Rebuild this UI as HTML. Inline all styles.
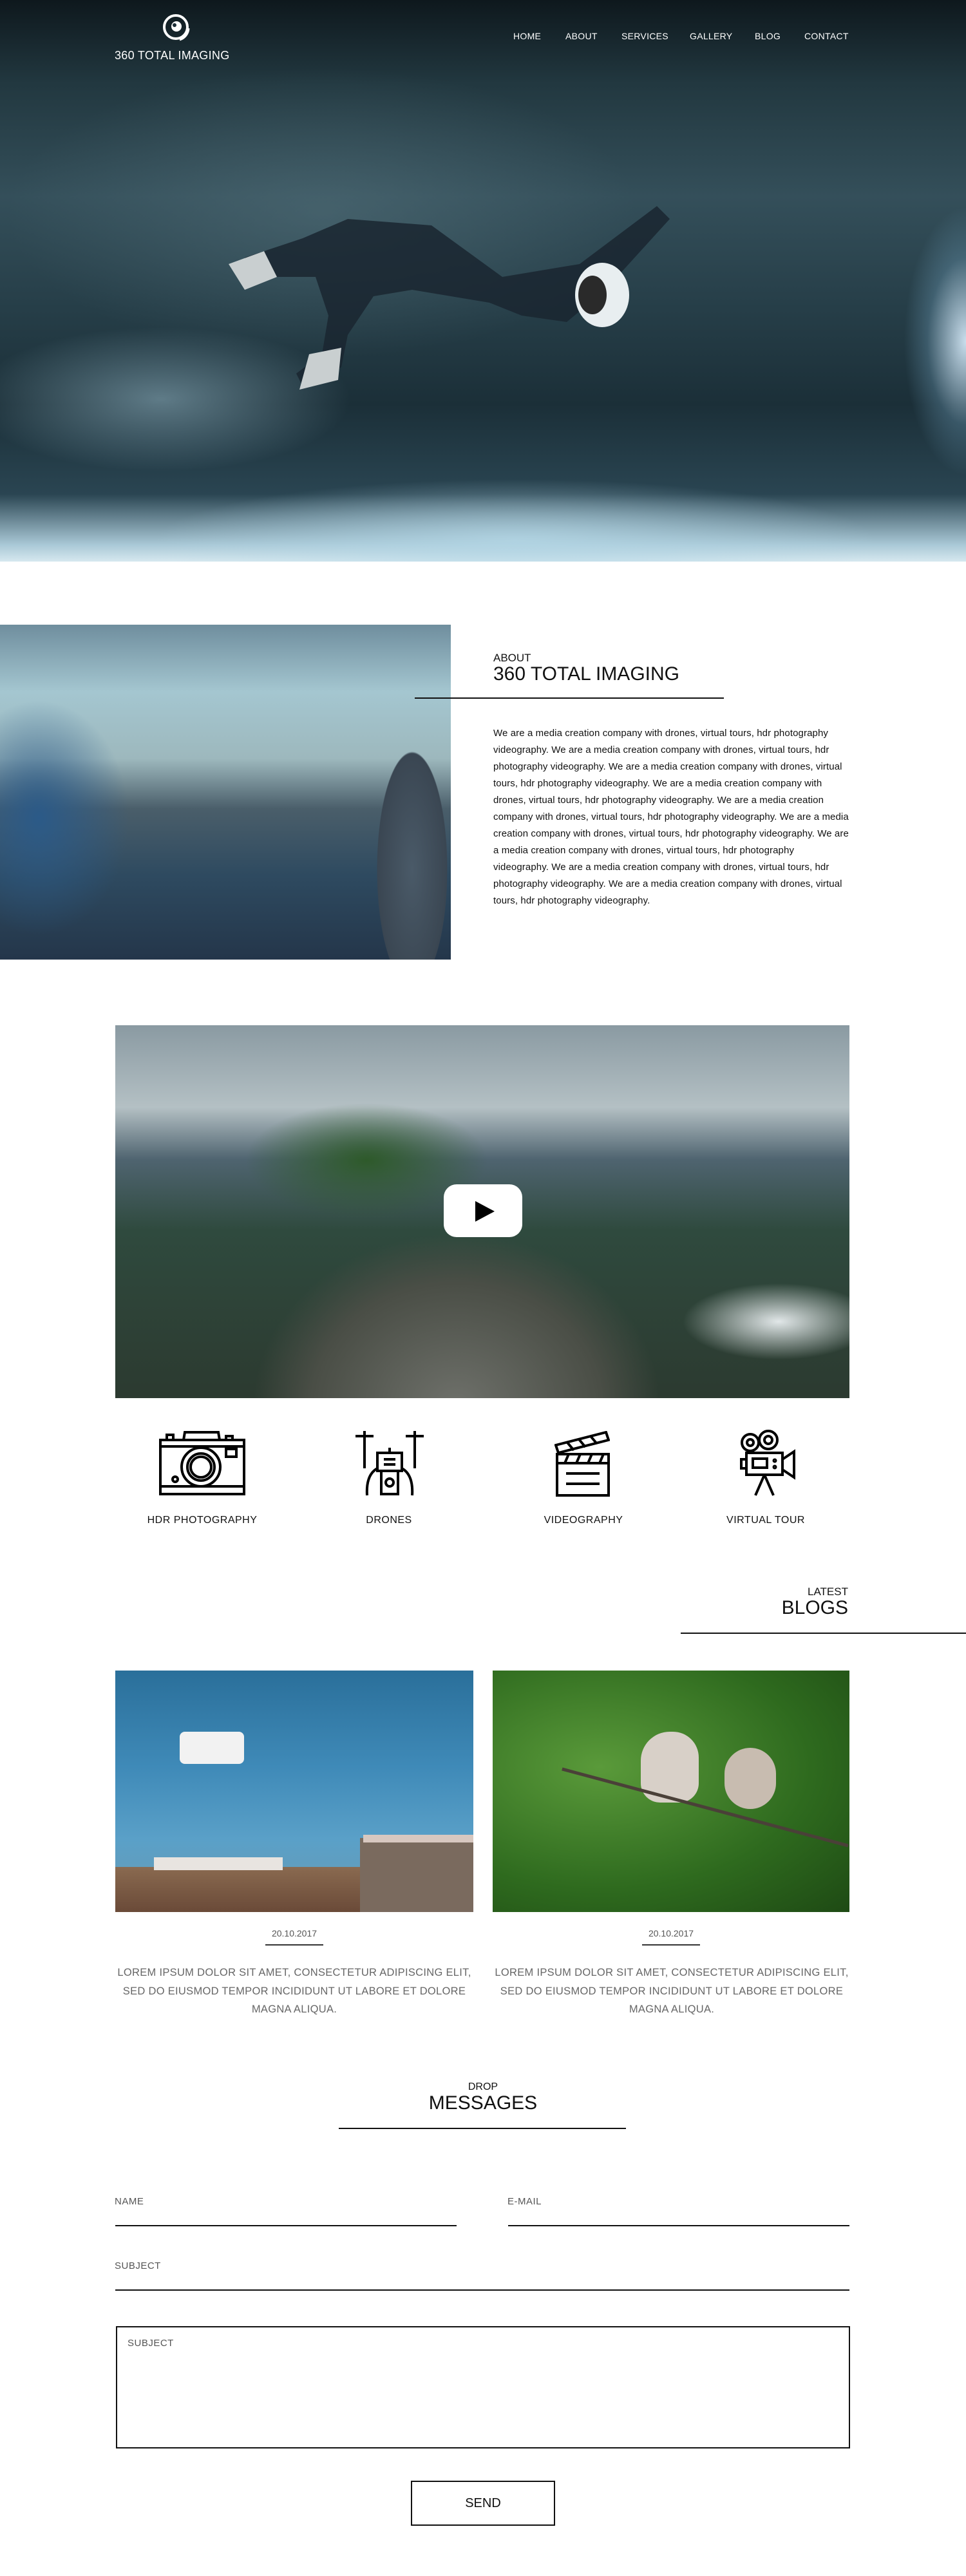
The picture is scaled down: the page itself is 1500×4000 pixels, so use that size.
<!DOCTYPE html>
<html><head><meta charset="utf-8"><style>
*{margin:0;padding:0;box-sizing:border-box}
body{width:1500px;height:4000px;position:relative;background:#fff;font-family:"Liberation Sans",sans-serif;color:#111;overflow:hidden}
.a{position:absolute}
.hero{left:0;top:0;width:1500px;height:872px;background:
radial-gradient(ellipse 120px 260px at 1500px 530px,rgba(220,240,255,.9),rgba(120,170,200,.3) 50%,transparent 80%),
radial-gradient(ellipse 420px 160px at 250px 620px,rgba(150,185,200,.55),transparent 70%),
radial-gradient(ellipse 700px 120px at 800px 840px,rgba(180,215,230,.8),transparent 80%),
radial-gradient(ellipse 650px 300px at 500px 330px,rgba(90,120,130,.45),transparent 75%),
linear-gradient(180deg,#0e181d 0%,#223840 15%,#344f5a 35%,#263e48 55%,#1b2f38 72%,#2a4552 88%,#a9c8d6 97%,#d6e8ef 100%)}
.nav{top:48px;font-size:14px;color:#fff;letter-spacing:.3px}
.body{left:766px;top:1126px;width:555px;font-size:15px;line-height:26px;color:#111;letter-spacing:.1px}
.lbl{font-size:15px;color:#555;letter-spacing:.5px}
.svc{top:2352px;font-size:16px;text-align:center;width:260px;letter-spacing:.5px}
.blogt{font-size:16.5px;color:#666;text-align:center;line-height:28.5px;width:556px;letter-spacing:.3px}
</style></head><body>
<div class="a hero"></div>
<svg class="a" style="left:340px;top:300px" width="720" height="340" viewBox="0 0 720 340">
<path d="M40 100 L130 70 L200 40 L330 50 L440 130 L560 110 L680 20 L700 40 L600 150 L540 200 L470 190 L420 170 L300 150 L240 160 L200 220 L190 270 L130 300 L120 280 L160 250 L170 190 L150 130 L60 130 Z" fill="#1a2630" opacity=".85"/>
<ellipse cx="595" cy="158" rx="42" ry="50" fill="#e8eef0"/>
<ellipse cx="580" cy="158" rx="22" ry="30" fill="#2a2a2a"/>
<path d="M15 110 L70 90 L90 130 L40 150 Z" fill="#c9cfd0"/>
<path d="M140 250 L190 240 L185 290 L125 305 Z" fill="#c9cfd0"/>
</svg>
<svg class="a" style="left:249px;top:20px" width="48" height="48" viewBox="0 0 48 48"><circle cx="24" cy="22" r="18" fill="none" stroke="#fff" stroke-width="4"/><circle cx="25" cy="21" r="8" fill="#fff"/><circle cx="22" cy="19" r="3" fill="#1b2d36"/><path d="M44 24 A20 20 0 0 1 30 42" stroke="#fff" stroke-width="3" fill="none"/></svg>
<div class="a" style="left:178px;top:76px;color:#fff;font-size:18px;letter-spacing:.3px">360 TOTAL IMAGING</div>
<div class="a nav" style="left:797px">HOME</div>
<div class="a nav" style="left:878px">ABOUT</div>
<div class="a nav" style="left:965px">SERVICES</div>
<div class="a nav" style="left:1071px">GALLERY</div>
<div class="a nav" style="left:1172px">BLOG</div>
<div class="a nav" style="left:1249px">CONTACT</div>

<div class="a" style="left:0;top:970px;width:700px;height:520px;background:
radial-gradient(ellipse 90px 300px at 640px 380px,#4a5a68,#3a4652 60%,transparent 61%),
radial-gradient(ellipse 200px 260px at 60px 300px,#2b5a88,transparent 70%),
linear-gradient(180deg,#6f8e9e 0%,#a4c6d0 20%,#9db8bd 40%,#4a5e6a 55%,#2e4a60 75%,#24364a 100%)"></div>
<div class="a" style="left:766px;top:1012px;font-size:17px">ABOUT</div>
<div class="a" style="left:766px;top:1030px;font-size:30px">360 TOTAL IMAGING</div>
<div class="a" style="left:644px;top:1083px;width:480px;height:2px;background:#111"></div>
<div class="a body">We are a media creation company with drones, virtual tours, hdr photography videography. We are a media creation company with drones, virtual tours, hdr photography videography. We are a media creation company with drones, virtual tours, hdr photography videography. We are a media creation company with drones, virtual tours, hdr photography videography. We are a media creation company with drones, virtual tours, hdr photography videography. We are a media creation company with drones, virtual tours, hdr photography videography. We are a media creation company with drones, virtual tours, hdr photography videography. We are a media creation company with drones, virtual tours, hdr photography videography. We are a media creation company with drones, virtual tours, hdr photography videography.</div>

<div class="a" style="left:179px;top:1592px;width:1140px;height:579px;overflow:hidden;background:linear-gradient(180deg,#8a9aa2 0%,#b4c0c4 22%,#4f6470 36%,#2f4a3e 55%,#2c3a30 100%)">
<div class="a" style="left:80px;top:170px;width:900px;height:420px;background:radial-gradient(ellipse 450px 380px at 450px 420px,#6e706a,#4a4e46 50%,transparent 70%)"></div>
<div class="a" style="left:200px;top:120px;width:380px;height:180px;background:radial-gradient(ellipse at 50% 50%,#2e5a2a,transparent 70%)"></div>
<div class="a" style="left:880px;top:400px;width:300px;height:120px;background:radial-gradient(ellipse at 50% 50%,rgba(235,240,242,.95),transparent 70%)"></div>
<div class="a" style="left:510px;top:247px;width:122px;height:82px;background:#fff;border-radius:20px"></div>
<svg class="a" style="left:555px;top:271px" width="36" height="36" viewBox="0 0 36 36"><path d="M4 2 L34 18 L4 34 Z" fill="#000"/></svg>
</div>

<svg class="a" style="left:247px;top:2222px" width="134" height="102" viewBox="0 0 134 102" fill="none" stroke="#000" stroke-width="4"><rect x="2" y="14" width="130" height="84"/><path d="M2 24H132M2 86H132M38 14L40 2H92L94 14M12 14V6H22V14M104 14V8H114V14"/><circle cx="65" cy="56" r="30"/><circle cx="65" cy="56" r="21"/><circle cx="65" cy="56" r="16"/><rect x="104" y="28" width="16" height="12"/><circle cx="25" cy="75" r="4"/></svg>
<svg class="a" style="left:550px;top:2220px" width="110" height="104" viewBox="0 0 110 104" fill="none" stroke="#000" stroke-width="4"><path d="M2 10H30M16 2V22M80 10H108M94 2V22M16 22V60M94 22V60"/><rect x="36" y="36" width="38" height="28"/><path d="M46 46H64M46 54H64M55 36V28"/><path d="M36 60Q18 70 20 102M74 60Q92 70 90 102"/><rect x="42" y="64" width="26" height="36"/><circle cx="55" cy="82" r="6"/></svg>
<svg class="a" style="left:861px;top:2222px" width="86" height="102" viewBox="0 0 86 102" fill="none" stroke="#000" stroke-width="4"><path d="M2 22L80 2L84 14L6 34Z"/><path d="M20 18L30 30M38 13L48 25M56 8L66 20"/><rect x="4" y="36" width="80" height="64"/><path d="M4 50H84M16 50L22 36M34 50L40 36M52 50L58 36M70 50L76 36M18 66H70M18 82H70"/></svg>
<svg class="a" style="left:1147px;top:2220px" width="90" height="104" viewBox="0 0 90 104" fill="none" stroke="#000" stroke-width="4"><circle cx="18" cy="20" r="13"/><circle cx="18" cy="20" r="5"/><circle cx="46" cy="16" r="14"/><circle cx="46" cy="16" r="6"/><rect x="12" y="36" width="56" height="34"/><rect x="22" y="45" width="22" height="14"/><path d="M68 46L86 34V74L68 62M12 46H4V60H12M40 70L26 102M40 70L54 102"/><circle cx="56" cy="48" r="1.5"/><circle cx="56" cy="58" r="1.5"/></svg>
<div class="a svc" style="left:184px">HDR PHOTOGRAPHY</div>
<div class="a svc" style="left:474px">DRONES</div>
<div class="a svc" style="left:776px">VIDEOGRAPHY</div>
<div class="a svc" style="left:1059px">VIRTUAL TOUR</div>

<div class="a" style="right:183px;top:2462px;font-size:17px">LATEST</div>
<div class="a" style="right:183px;top:2480px;font-size:30px">BLOGS</div>
<div class="a" style="left:1057px;top:2535px;width:443px;height:2px;background:#111"></div>

<div class="a" style="left:179px;top:2594px;width:556px;height:375px;overflow:hidden;background:linear-gradient(180deg,#2a6f9a 0%,#3f8ab8 40%,#5aa0c8 70%,#6a9ab0 100%)">
<div class="a" style="left:0;top:305px;width:556px;height:70px;background:linear-gradient(180deg,#8a6a50,#6a4a38)"></div>
<div class="a" style="left:60px;top:290px;width:200px;height:20px;background:#e8e4e0"></div>
<div class="a" style="left:380px;top:260px;width:176px;height:115px;background:#7a6a5e"></div>
<div class="a" style="left:385px;top:255px;width:171px;height:12px;background:#d8c8c0"></div>
<div class="a" style="left:100px;top:95px;width:100px;height:50px;background:#f2f2f2;border-radius:8px"></div>
</div>
<div class="a" style="left:765px;top:2594px;width:554px;height:375px;overflow:hidden;background:radial-gradient(ellipse at 30% 40%,#5a9a3a,#2e6a1e 60%,#1e4a14)">
<div class="a" style="left:230px;top:95px;width:90px;height:110px;background:#d8d0c8;border-radius:45px 40px 30px 30px"></div>
<div class="a" style="left:360px;top:120px;width:80px;height:95px;background:#c8bcb0;border-radius:40px"></div>
<div class="a" style="left:100px;top:210px;width:460px;height:5px;background:#4a4038;transform:rotate(15deg)"></div>
</div>

<div class="a" style="left:179px;top:2994px;width:556px;text-align:center;font-size:14px;color:#555">20.10.2017</div>
<div class="a" style="left:765px;top:2994px;width:554px;text-align:center;font-size:14px;color:#555">20.10.2017</div>
<div class="a" style="left:412px;top:3019px;width:90px;height:2px;background:#333"></div>
<div class="a" style="left:997px;top:3019px;width:90px;height:2px;background:#333"></div>
<div class="a blogt" style="left:179px;top:3049px">LOREM IPSUM DOLOR SIT AMET, CONSECTETUR ADIPISCING ELIT, SED DO EIUSMOD TEMPOR INCIDIDUNT UT LABORE ET DOLORE MAGNA ALIQUA.</div>
<div class="a blogt" style="left:765px;top:3049px">LOREM IPSUM DOLOR SIT AMET, CONSECTETUR ADIPISCING ELIT, SED DO EIUSMOD TEMPOR INCIDIDUNT UT LABORE ET DOLORE MAGNA ALIQUA.</div>

<div class="a" style="left:0;width:1500px;top:3232px;text-align:center;font-size:16px">DROP</div>
<div class="a" style="left:0;width:1500px;top:3249px;text-align:center;font-size:30px">MESSAGES</div>
<div class="a" style="left:526px;top:3304px;width:446px;height:2px;background:#111"></div>

<div class="a lbl" style="left:178px;top:3410px">NAME</div>
<div class="a lbl" style="left:788px;top:3410px">E-MAIL</div>
<div class="a" style="left:179px;top:3455px;width:530px;height:2px;background:#111"></div>
<div class="a" style="left:789px;top:3455px;width:530px;height:2px;background:#111"></div>
<div class="a lbl" style="left:178px;top:3510px">SUBJECT</div>
<div class="a" style="left:179px;top:3555px;width:1140px;height:2px;background:#111"></div>
<div class="a" style="left:180px;top:3612px;width:1140px;height:190px;border:2px solid #111"></div>
<div class="a lbl" style="left:198px;top:3630px">SUBJECT</div>
<div class="a" style="left:638px;top:3852px;width:224px;height:70px;border:2px solid #111;text-align:center;line-height:66px;font-size:20px">SEND</div>
</body></html>
